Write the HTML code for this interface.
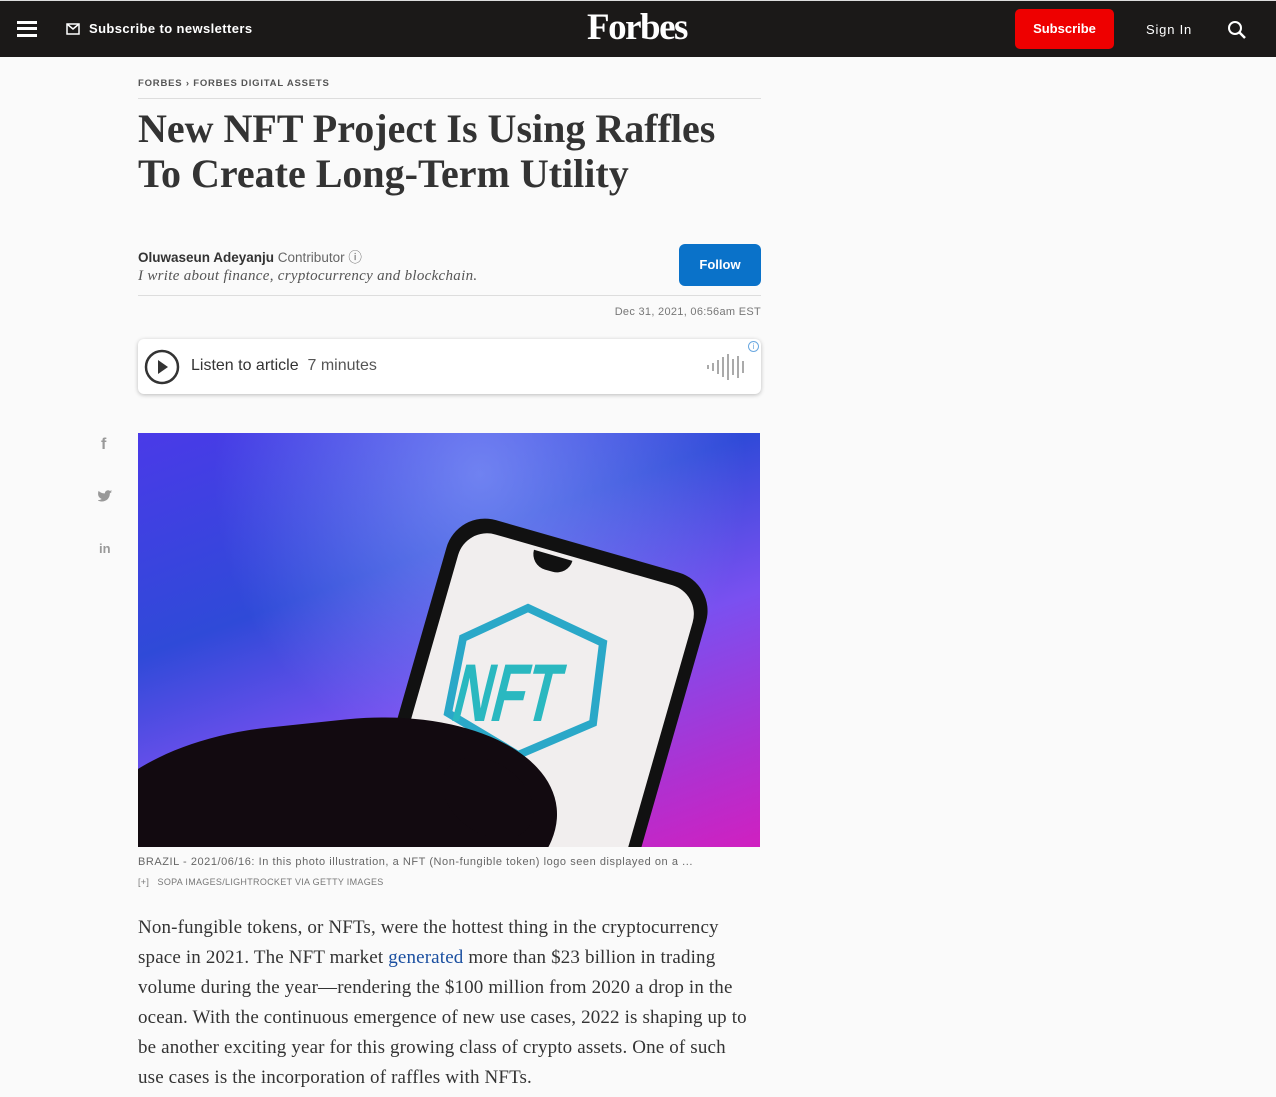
<!DOCTYPE html>
<html><head><meta charset="utf-8"><style>
*{margin:0;padding:0;box-sizing:border-box}
body{width:1276px;height:1097px;overflow:hidden;background:#fafafa;font-family:"Liberation Sans",sans-serif;position:relative}
.top{position:absolute;left:0;top:1px;width:1276px;height:56px;background:#1b1918}
.ab{position:absolute}
</style></head><body>
<div style="position:absolute;top:0;left:0;width:1276px;height:1px;background:#ddd"></div>
<div class="top">
 <div class="ab" style="left:17px;top:20px;width:20px;height:3px;background:#fff"></div>
 <div class="ab" style="left:17px;top:26px;width:20px;height:3px;background:#fff"></div>
 <div class="ab" style="left:17px;top:33px;width:20px;height:3px;background:#fff"></div>
 <svg class="ab" style="left:66px;top:22px" width="14" height="12" viewBox="0 0 14 12"><rect x="1" y="1" width="12" height="10" fill="none" stroke="#fff" stroke-width="1.5"/><path d="M1 1l6 5 6-5" fill="none" stroke="#fff" stroke-width="1.5"/></svg>
 <div class="ab" style="left:89px;top:20px;color:#fff;font-weight:bold;font-size:13px;letter-spacing:.4px">Subscribe to newsletters</div>
 <div class="ab" style="left:587px;top:5px;color:#fff;font-family:'Liberation Serif',serif;font-weight:bold;font-size:37px;letter-spacing:-1.5px">Forbes</div>
 <div class="ab" style="left:1015px;top:8px;width:99px;height:40px;background:#e00;border-radius:5px;color:#fff;font-weight:bold;font-size:13px;text-align:center;line-height:40px">Subscribe</div>
 <div class="ab" style="left:1146px;top:21px;color:#fff;font-size:13px;letter-spacing:.8px">Sign In</div>
 <svg class="ab" style="left:1227px;top:19px" width="20" height="20" viewBox="0 0 20 20"><circle cx="8" cy="8" r="6" fill="none" stroke="#fff" stroke-width="2"/><path d="M12.5 12.5l5.5 5.5" stroke="#fff" stroke-width="2.5"/></svg>
</div>
<div class="ab" style="left:138px;top:78px;font-size:9.5px;font-weight:bold;color:#555;letter-spacing:.8px">FORBES &rsaquo; FORBES DIGITAL ASSETS</div>
<div class="ab" style="left:138px;top:98px;width:623px;height:1px;background:#ddd"></div>
<div class="ab" style="left:138px;top:106px;font-family:'Liberation Serif',serif;font-weight:bold;font-size:40px;line-height:45px;color:#333;width:600px">New NFT Project Is Using Raffles To Create Long-Term Utility</div>
<div class="ab" style="left:138px;top:246px;font-size:13.5px;color:#333"><b>Oluwaseun Adeyanju</b> <span style="color:#666">Contributor ⓘ</span></div>
<div class="ab" style="left:138px;top:268px;font-family:'Liberation Serif',serif;font-style:italic;font-size:15px;color:#555;letter-spacing:.3px">I write about finance, cryptocurrency and blockchain.</div>
<div class="ab" style="left:679px;top:244px;width:82px;height:42px;background:#0a72c9;border-radius:6px;color:#fff;font-weight:bold;font-size:13px;text-align:center;line-height:42px">Follow</div>
<div class="ab" style="left:138px;top:295px;width:623px;height:1px;background:#ddd"></div>
<div class="ab" style="left:561px;width:200px;text-align:right;top:306px;font-size:11px;color:#777;letter-spacing:.3px">Dec 31, 2021, 06:56am EST</div>
<div class="ab" style="left:138px;top:339px;width:623px;height:55px;background:#fff;border-radius:6px;box-shadow:0 1px 4px rgba(0,0,0,.25)">
 <svg class="ab" style="left:6px;top:10px" width="36" height="36" viewBox="0 0 36 36"><circle cx="18" cy="18" r="16" fill="none" stroke="#333" stroke-width="2.5"/><path d="M14 11l10 7-10 7z" fill="#333"/></svg>
 <div class="ab" style="left:53px;top:18px;font-size:16px;color:#333">Listen to article&nbsp;&nbsp;<span style="color:#555">7 minutes</span></div>
 <svg class="ab" style="left:567px;top:12px" width="44" height="32"><g stroke="#aaa" stroke-width="2"><path d="M3 14v4M8 12v8M13 9v14M18 6v20M23 3v26M28 8v16M33 5v22M38 10v12"/></g></svg>
 <div class="ab" style="left:610px;top:2px;width:11px;height:11px;border:1px solid #6aa8e0;border-radius:50%;font-size:8px;color:#6aa8e0;text-align:center;line-height:9px">i</div>
</div>
<div class="ab" style="left:101px;top:436px;font-size:16px;color:#999;font-weight:bold">f</div>
<svg class="ab" style="left:98px;top:490px" width="15" height="13" viewBox="0 0 24 20"><path d="M23 2a9 9 0 01-3 1 5 5 0 002-3 9 9 0 01-3 1 5 5 0 00-8 4A13 13 0 011 1s-4 9 5 13a13 13 0 01-7 2c9 5 20 0 20-11z" fill="#999"/></svg>
<div class="ab" style="left:99px;top:541px;font-size:13px;color:#999;font-weight:bold">in</div>
<div class="ab" style="left:138px;top:433px;width:622px;height:414px;overflow:hidden;background:linear-gradient(160deg,#4a3ae8 0%,#2f4ad8 35%,#7a50f0 60%,#b030d0 85%,#d020c0 100%)">
 <div class="ab" style="left:0;top:0;width:622px;height:414px;background:radial-gradient(ellipse at 55% 10%,rgba(150,170,255,.6),transparent 55%)"></div>
 <div class="ab" style="left:255px;top:105px;width:270px;height:430px;background:#111;border-radius:40px;transform:rotate(16deg);transform-origin:center"></div>
 <div class="ab" style="left:268px;top:119px;width:244px;height:404px;background:#f1eeee;border-radius:30px;transform:rotate(16deg)"></div>
 <div class="ab" style="left:393px;top:122px;width:40px;height:16px;background:#111;border-radius:0 0 20px 20px;transform:rotate(16deg)"></div>
 <svg class="ab" style="left:295px;top:170px" width="185" height="160" viewBox="0 0 185 160"><polygon points="95,5 170,40 160,120 85,152 15,110 30,35" fill="none" stroke="#2aa8c8" stroke-width="8"/><text x="45" y="118" font-family="Liberation Sans" font-weight="bold" font-size="82" fill="#2ab8c0" transform="skewX(-14)" textLength="105" lengthAdjust="spacingAndGlyphs">NFT</text></svg>
 <div class="ab" style="left:-60px;top:290px;width:480px;height:220px;background:#120a10;border-radius:50%/60%;transform:rotate(-6deg)"></div>
 <div class="ab" style="left:300px;top:330px;width:100px;height:70px;background:#120a10;border-radius:50%;transform:rotate(35deg)"></div>
</div>
<div class="ab" style="left:138px;top:856px;font-size:11px;color:#666;letter-spacing:.55px">BRAZIL - 2021/06/16: In this photo illustration, a NFT (Non-fungible token) logo seen displayed on a ...</div>
<div class="ab" style="left:138px;top:877px;font-size:9px;color:#777;letter-spacing:.3px">[+]&nbsp;&nbsp; SOPA IMAGES/LIGHTROCKET VIA GETTY IMAGES</div>
<div class="ab" style="left:138px;top:913px;width:612px;font-family:'Liberation Serif',serif;font-size:19px;line-height:30px;color:#333;letter-spacing:.15px">Non-fungible tokens, or NFTs, were the hottest thing in the cryptocurrency space in 2021. The NFT market <span style="color:#1a4fa0">generated</span> more than $23 billion in trading volume during the year—rendering the $100 million from 2020 a drop in the ocean. With the continuous emergence of new use cases, 2022 is shaping up to be another exciting year for this growing class of crypto assets. One of such use cases is the incorporation of raffles with NFTs.</div>
</body></html>
